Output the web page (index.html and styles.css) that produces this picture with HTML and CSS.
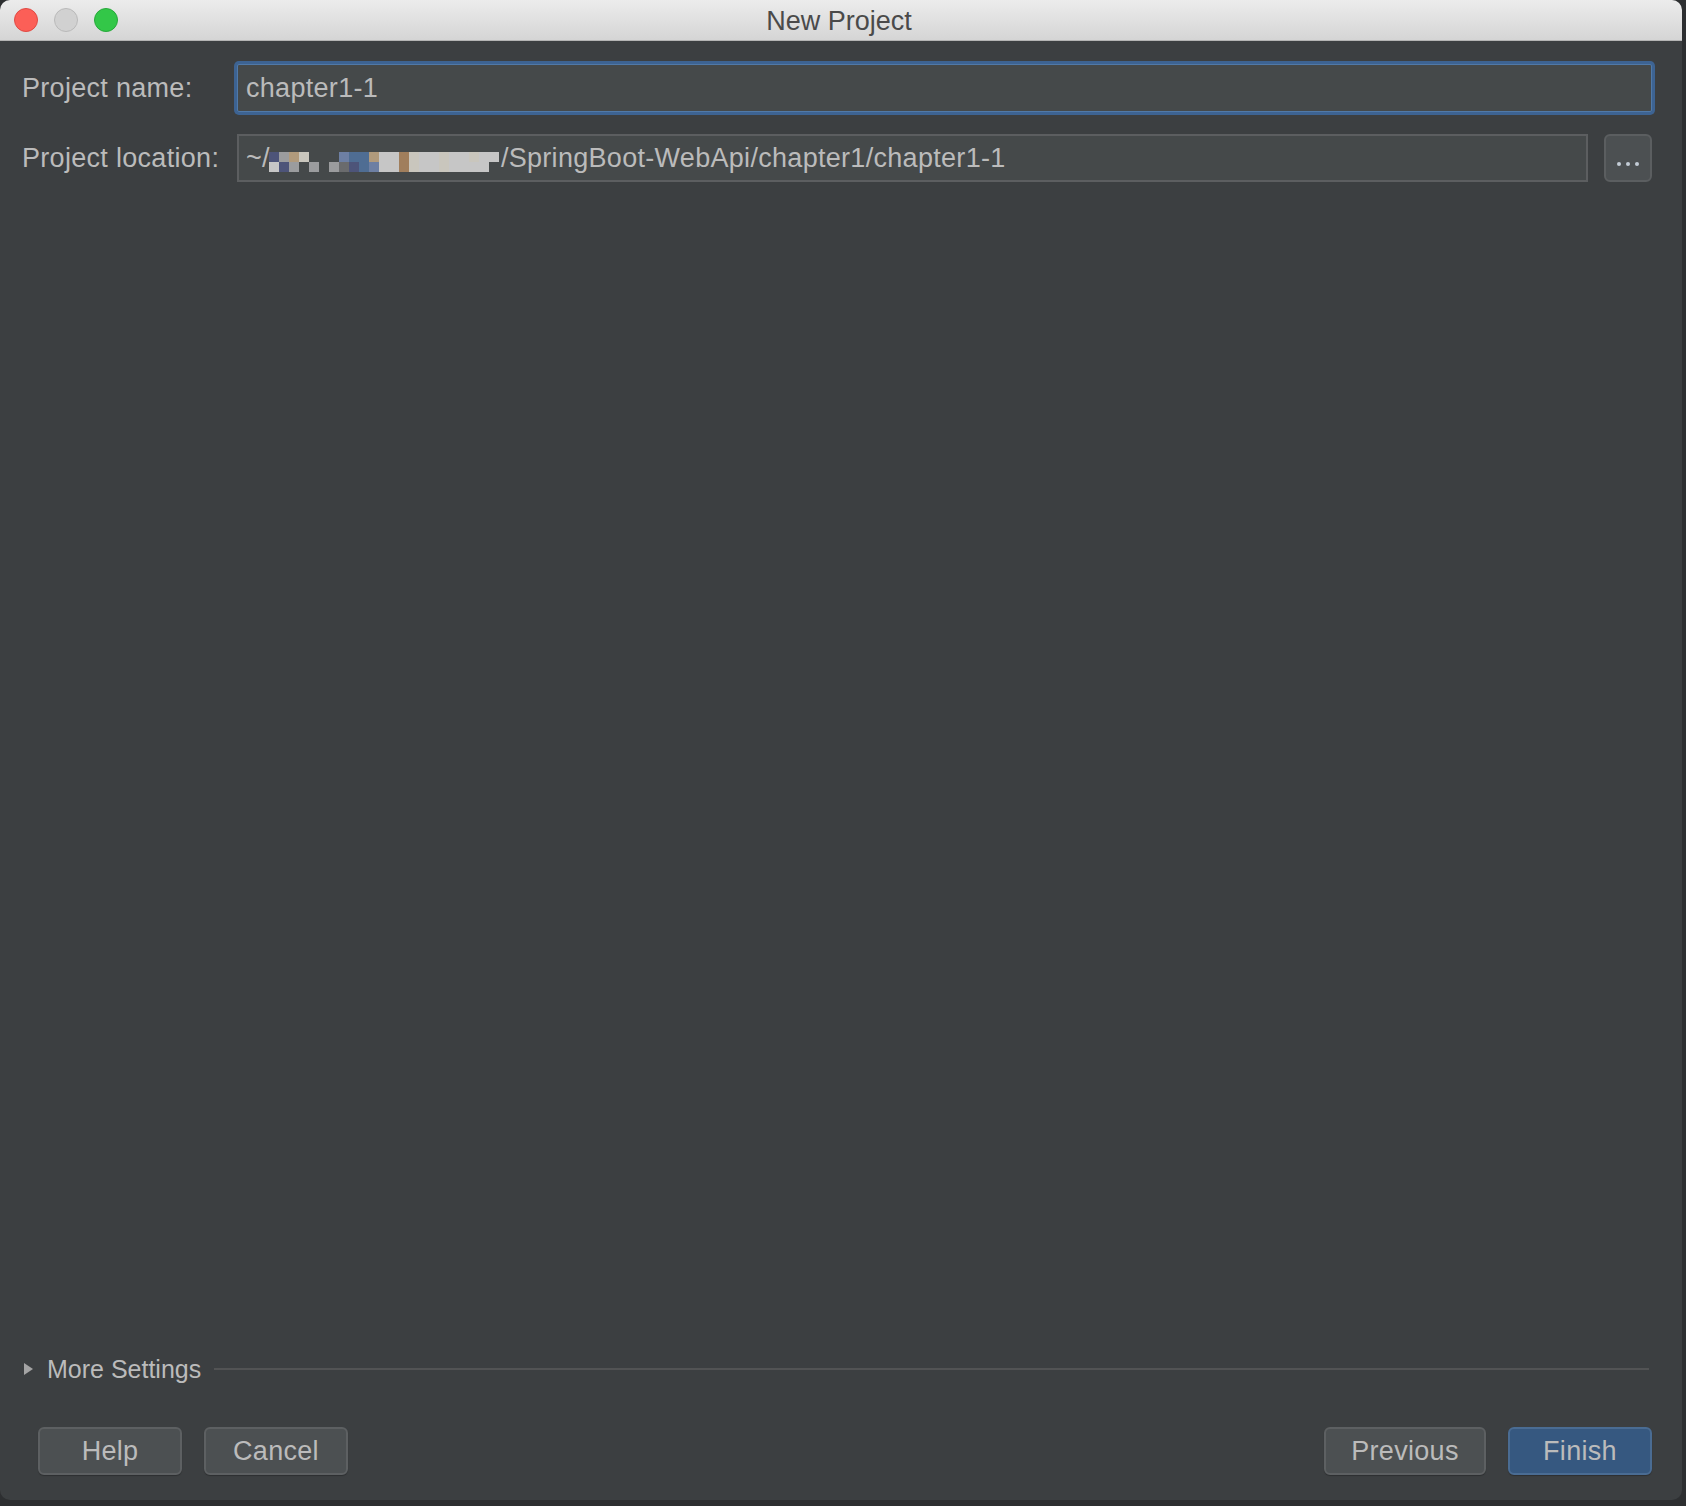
FILE: index.html
```html
<!DOCTYPE html>
<html lang="en">
<head>
    <meta charset="UTF-8">
    <title>New Project</title>
    <link rel="stylesheet" href="styles.css">
</head>
<body>
    <div class="window">
        <div class="titlebar">
            <div class="lights">
                <span class="light red"></span>
                <span class="light gray"></span>
                <span class="light green"></span>
            </div>
            <div class="title">New Project</div>
        </div>

        <div class="content">
            <div class="form">
                <label for="project-name">Project name:</label>
                <div class="field focused">
                    <input type="text" id="project-name" value="chapter1-1">
                </div>

                <label>Project location:</label>
                <div class="location-row">
                    <div class="field path">
                        <span>~/</span><span class="mosaic">
                            <i class="c1"></i><i class="c2"></i><i class="c3"></i><i class="c4"></i><i class="c0"></i><i class="c0"></i><i class="c0"></i><i class="c5"></i><i class="c6"></i><i class="c6"></i><i class="c3"></i><i class="c7"></i><i class="c7"></i><i class="c8"></i><i class="c4"></i><i class="c7"></i><i class="c7"></i><i class="c4"></i><i class="c7"></i><i class="c7"></i><i class="c4"></i><i class="c7"></i><i class="c7"></i>
                            <i class="c7"></i><i class="c1"></i><i class="c2"></i><i class="c0"></i><i class="c2"></i><i class="c0"></i><i class="c2"></i><i class="c9"></i><i class="c1"></i><i class="c6"></i><i class="c5"></i><i class="c7"></i><i class="c7"></i><i class="c8"></i><i class="c4"></i><i class="c7"></i><i class="c7"></i><i class="c4"></i><i class="c7"></i><i class="c7"></i><i class="c7"></i><i class="c7"></i><i class="c0"></i>
                        </span><span>/SpringBoot-WebApi/chapter1/chapter1-1</span>
                    </div>
                    <button class="browse" title="Browse">
                        <span class="dot"></span><span class="dot"></span><span class="dot"></span>
                    </button>
                </div>
            </div>

            <div class="more-settings">
                <span class="arrow"></span>
                <span class="more-label">More Settings</span>
                <span class="separator"></span>
            </div>

            <div class="buttons">
                <div class="group">
                    <button class="btn">Help</button>
                    <button class="btn">Cancel</button>
                </div>
                <div class="group">
                    <button class="btn wide">Previous</button>
                    <button class="btn primary">Finish</button>
                </div>
            </div>
        </div>
    </div>
</body>
</html>
```

FILE: styles.css
```css
body {
    margin: 0;
    background-color: #2d2f31;
    font-family: "Liberation Sans", Arial, sans-serif;
    color: #bbbbbb;
}
.window {
    width: 1682px;
    height: 1500px;
    display: flex;
    flex-direction: column;
    background-color: #3c3f41;
    border-radius: 10px;
    overflow: hidden;
}
.titlebar {
    height: 40px;
    flex: none;
    position: relative;
    display: flex;
    align-items: center;
    justify-content: center;
    background: linear-gradient(#ececec, #d5d5d5);
    border-bottom: 1px solid #b4b4b4;
}
.lights {
    position: absolute;
    left: 14px;
    top: 8px;
    display: flex;
    gap: 16px;
}
.light {
    width: 22px;
    height: 22px;
    border-radius: 50%;
    border: 1px solid;
}
.light.red {
    background-color: #fc5f57;
    border-color: #df4a44;
}
.light.gray {
    background-color: #d1d1d1;
    border-color: #b9b9b9;
}
.light.green {
    background-color: #33c748;
    border-color: #27a83b;
}
.title {
    font-size: 27px;
    color: #4a4a4a;
    margin: 2px 4px 0 0;
}
.content {
    flex: 1;
    display: flex;
    flex-direction: column;
    padding: 23px 30px 25px 22px;
}
.form {
    display: grid;
    grid-template-columns: 215px 1fr;
    row-gap: 22px;
    align-items: center;
    font-size: 27px;
    letter-spacing: 0.3px;
}
label {
    color: #bbbbbb;
    padding-top: 1px;
}
.field {
    height: 48px;
    box-sizing: border-box;
    background-color: #45494a;
    border: 1px solid #646464;
    display: flex;
    align-items: center;
    padding: 1px 8px 0;
    white-space: nowrap;
}
.field.focused {
    border-color: #5079a8;
    box-shadow: 0 0 0 3px #3d6392;
    border-radius: 2px;
}
.field input {
    flex: 1;
    background: transparent;
    border: none;
    outline: none;
    color: #bbbbbb;
    font: inherit;
    letter-spacing: inherit;
    padding: 0;
}
.location-row {
    display: flex;
    gap: 16px;
}
.location-row .path {
    flex: 1;
    border-width: 2px;
    border-color: #5c5e60;
    padding-left: 7px;
}
.mosaic {
    display: inline-grid;
    grid-template-columns: repeat(23, 10px);
    grid-auto-rows: 10px;
    margin: 6px 2px 0 -1px;
}
.mosaic i { display: block; }
.mosaic .c0 { background-color: #45494a; }
.mosaic .c1 { background-color: #4d5479; }
.mosaic .c2 { background-color: #9b9c9e; }
.mosaic .c3 { background-color: #b09a7c; }
.mosaic .c4 { background-color: #c9c6bd; }
.mosaic .c5 { background-color: #6d7fa3; }
.mosaic .c6 { background-color: #4f6d93; }
.mosaic .c7 { background-color: #c6c6c6; }
.mosaic .c8 { background-color: #a07e5c; }
.mosaic .c9 { background-color: #6a6b6d; }
.browse {
    width: 48px;
    height: 48px;
    flex: none;
    box-sizing: border-box;
    background-color: #4c5052;
    border: 2px solid #5b5e60;
    border-radius: 6px;
    display: flex;
    align-items: flex-end;
    justify-content: center;
    gap: 5px;
    padding: 0 0 14px;
    cursor: pointer;
}
.dot {
    width: 4px;
    height: 4px;
    border-radius: 50%;
    background-color: #c3ccd6;
}
.more-settings {
    margin-top: auto;
    display: flex;
    align-items: center;
    height: 30px;
    padding-left: 2px;
    font-size: 25px;
}
.arrow {
    width: 0;
    height: 0;
    border-top: 6px solid transparent;
    border-bottom: 6px solid transparent;
    border-left: 9px solid #a4a4a4;
    margin-right: 14px;
}
.more-label {
    color: #bbbbbb;
}
.separator {
    flex: 1;
    height: 2px;
    background-color: #525354;
    margin-left: 13px;
    margin-right: 3px;
}
.buttons {
    margin-top: 43px;
    display: flex;
    justify-content: space-between;
    padding-left: 16px;
}
.group {
    display: flex;
    gap: 22px;
}
.btn {
    width: 144px;
    height: 48px;
    box-sizing: border-box;
    background-color: #4c5052;
    border: 2px solid #5d6062;
    border-radius: 6px;
    color: #bbbbbb;
    font-family: "Liberation Sans", Arial, sans-serif;
    font-size: 27px;
    letter-spacing: 0.3px;
    cursor: pointer;
    box-shadow: 0 1px 1px rgba(0, 0, 0, 0.25);
}
.btn.wide {
    width: 162px;
}
.btn.primary {
    background-color: #365880;
    border-color: #4a6c93;
}
```
